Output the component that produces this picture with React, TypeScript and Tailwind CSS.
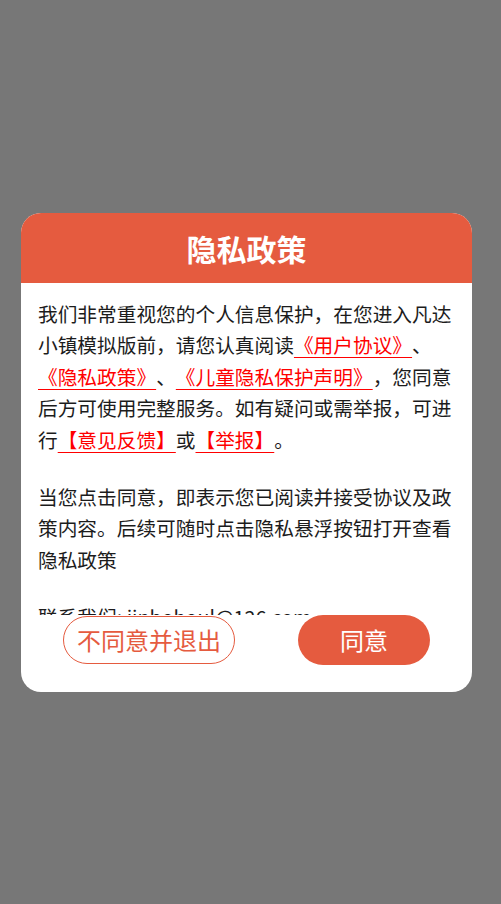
const FONT = { fontFamily: '"Noto Sans CJK SC", "Noto Sans", sans-serif' };

function Link({ children }: { children: React.ReactNode }) {
  return (
    <span className="text-[#ff0000] underline decoration-[#ff0000] decoration-1 underline-offset-[4px]">
      {children}
    </span>
  );
}

export default function App() {
  return (
    <div
      className="flex h-screen w-full items-center bg-[#777777] pl-[21px] [text-spacing-trim:space-all]"
      style={FONT}
    >
      <div className="flex h-[479px] w-[451px] flex-col overflow-hidden rounded-[20px] bg-white">
        <div className="flex h-[70px] shrink-0 items-center justify-center bg-[#e55b3f]">
          <h1 className="text-[30px] font-bold leading-none text-white">隐私政策</h1>
        </div>

        <div className="h-[332px] shrink-0 overflow-hidden px-[17px] pt-[15px] text-[19.7px] leading-[31.5px] text-[#1c1c1c]">
          <p className="mb-[25.5px]">
            我们非常重视您的个人信息保护，在您进入凡达小镇模拟版前，请您认真阅读
            <Link>《用户协议》</Link>、<Link>《隐私政策》</Link>、
            <Link>《儿童隐私保护声明》</Link>
            ，您同意后方可使用完整服务。如有疑问或需举报，可进行
            <Link>【意见反馈】</Link>或<Link>【举报】</Link>。
          </p>
          <p className="mb-[25.5px]">
            当您点击同意，即表示您已阅读并接受协议及政策内容。后续可随时点击隐私悬浮按钮打开查看隐私政策
          </p>
          <p>联系我们: jinbohoul@126.com</p>
        </div>

        <div className="flex h-[50px] shrink-0 items-center justify-between px-[42px]">
          <button className="flex h-[48px] w-[172px] items-center justify-center rounded-full border border-[#e55b3f] text-[24px] text-[#e55b3f]">
            不同意并退出
          </button>
          <button className="flex h-[50px] w-[132px] items-center justify-center rounded-full bg-[#e55b3f] text-[24px] text-white">
            同意
          </button>
        </div>
      </div>
    </div>
  );
}
